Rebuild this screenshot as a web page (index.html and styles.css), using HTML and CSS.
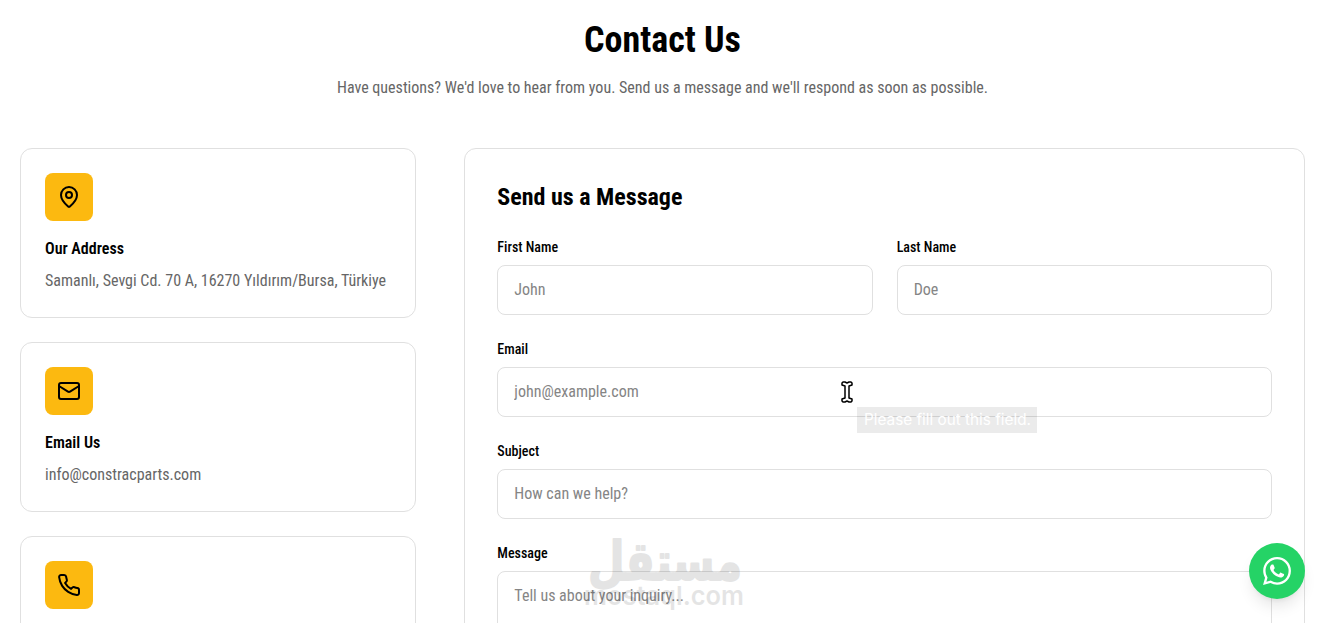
FILE: index.html
```html
<!DOCTYPE html>
<html lang="en">
<head>
    <meta charset="UTF-8">
    <meta name="viewport" content="width=device-width, initial-scale=1.0">
    <title>Contact Us</title>
    <link rel="stylesheet" href="styles.css">
</head>
<body>

    <main class="container">
        <header class="page-header">
            <h1>Contact Us</h1>
            <p>Have questions? We'd love to hear from you. Send us a message and we'll respond as soon as possible.</p>
        </header>

        <div class="contact-grid">
            <div class="info-list">
                <div class="info-card">
                    <div class="info-icon">
                        <svg viewBox="0 0 24 24"><path d="M20 10c0 4.993-5.539 10.193-7.399 11.799a1 1 0 0 1-1.202 0C9.539 20.193 4 14.993 4 10a8 8 0 0 1 16 0"/><circle cx="12" cy="10" r="3"/></svg>
                    </div>
                    <h3>Our Address</h3>
                    <p>Samanlı, Sevgi Cd. 70 A, 16270 Yıldırım/Bursa, Türkiye</p>
                </div>
                <div class="info-card">
                    <div class="info-icon">
                        <svg viewBox="0 0 24 24"><rect width="20" height="16" x="2" y="4" rx="2"/><path d="m22 7-8.97 5.7a1.94 1.94 0 0 1-2.06 0L2 7"/></svg>
                    </div>
                    <h3>Email Us</h3>
                    <p>info@constracparts.com</p>
                </div>
                <div class="info-card">
                    <div class="info-icon">
                        <svg viewBox="0 0 24 24"><path d="M22 16.92v3a2 2 0 0 1-2.18 2 19.79 19.79 0 0 1-8.63-3.07 19.5 19.5 0 0 1-6-6 19.79 19.79 0 0 1-3.07-8.67A2 2 0 0 1 4.11 2h3a2 2 0 0 1 2 1.72 12.84 12.84 0 0 0 .7 2.81 2 2 0 0 1-.45 2.11L8.09 9.91a16 16 0 0 0 6 6l1.27-1.27a2 2 0 0 1 2.11-.45 12.84 12.84 0 0 0 2.81.7A2 2 0 0 1 22 16.92z"/></svg>
                    </div>
                </div>
            </div>

            <form class="contact-form">
                <h2>Send us a Message</h2>
                <div class="form-row">
                    <div class="field">
                        <label for="first-name">First Name</label>
                        <input type="text" id="first-name" placeholder="John" required>
                    </div>
                    <div class="field">
                        <label for="last-name">Last Name</label>
                        <input type="text" id="last-name" placeholder="Doe" required>
                    </div>
                </div>
                <div class="field">
                    <label for="email">Email</label>
                    <input type="email" id="email" placeholder="john@example.com" required>
                </div>
                <div class="field">
                    <label for="subject">Subject</label>
                    <input type="text" id="subject" placeholder="How can we help?" required>
                </div>
                <div class="field">
                    <label for="message">Message</label>
                    <textarea id="message" rows="6" placeholder="Tell us about your inquiry..." required></textarea>
                </div>
            </form>
        </div>
    </main>

    <!-- Pointer and its tooltip -->
    <svg class="pointer" viewBox="0 0 12 22">
        <path d="M2 1h2l2 1 2-1h2l1 1v2L8 5v12l3 1v2l-1 1H8l-2-1-2 1H2l-1-1v-2l3-1V5L1 4V2z"/>
    </svg>
    <div class="tooltip">Please fill out this field.</div>

    <!-- Watermark -->
    <svg class="watermark" viewBox="0 0 164 76">
        <text class="mark-ar" x="82" y="45" text-anchor="middle" textLength="154" lengthAdjust="spacingAndGlyphs">مستقل</text>
        <text class="mark-en" x="1" y="70" textLength="160" lengthAdjust="spacingAndGlyphs">mostaql.com</text>
    </svg>

    <a class="whatsapp" href="#" aria-label="WhatsApp">
        <svg viewBox="0 0 24 24"><path d="M17.472 14.382c-.297-.149-1.758-.867-2.03-.967-.273-.099-.471-.148-.67.15-.197.297-.767.966-.94 1.164-.173.199-.347.223-.644.075-.297-.15-1.255-.463-2.39-1.475-.883-.788-1.48-1.761-1.653-2.059-.173-.297-.018-.458.13-.606.134-.133.298-.347.446-.52.149-.174.198-.298.298-.497.099-.198.05-.371-.025-.52-.075-.149-.669-1.612-.916-2.207-.242-.579-.487-.5-.669-.51-.173-.008-.371-.01-.57-.01-.198 0-.52.074-.792.372-.272.297-1.04 1.016-1.04 2.479 0 1.462 1.065 2.875 1.213 3.074.149.198 2.096 3.2 5.077 4.487.709.306 1.262.489 1.694.625.712.227 1.36.195 1.871.118.571-.085 1.758-.719 2.006-1.413.248-.694.248-1.289.173-1.413-.074-.124-.272-.198-.57-.347m-5.421 7.403h-.004a9.87 9.87 0 0 1-5.031-1.378l-.361-.214-3.741.982.998-3.648-.235-.374a9.86 9.86 0 0 1-1.51-5.26c.001-5.45 4.436-9.884 9.888-9.884 2.64 0 5.122 1.03 6.988 2.898a9.825 9.825 0 0 1 2.893 6.994c-.003 5.45-4.437 9.884-9.885 9.884m8.413-18.297A11.815 11.815 0 0 0 12.05 0C5.495 0 .16 5.335.157 11.892c0 2.096.547 4.142 1.588 5.945L.057 24l6.305-1.654a11.882 11.882 0 0 0 5.683 1.448h.005c6.554 0 11.89-5.335 11.893-11.893a11.821 11.821 0 0 0-3.48-8.413z"/></svg>
    </a>

</body>
</html>
```
FILE: styles.css
```css
* {
    box-sizing: border-box;
}

body {
    margin: 0;
    height: 100vh;
    overflow: hidden;
    font-family: "Roboto Condensed", Roboto, sans-serif;
    font-stretch: 75%;
    font-size: 16px;
    line-height: 24px;
    color: #000;
    background: #fff;
}

h1, h2, h3, p {
    margin: 0;
}

.container {
    padding: 20px 24px 0 20px;
}

.page-header {
    text-align: center;
    margin-bottom: 48px;
}

.page-header h1 {
    font-size: 36px;
    line-height: 40px;
    font-weight: 700;
    margin-bottom: 16px;
}

.page-header p,
.info-card p {
    color: #666;
}

.contact-grid {
    display: grid;
    grid-template-columns: repeat(3, minmax(0, 1fr));
    gap: 48px;
}

/* Left column */
.info-list {
    display: flex;
    flex-direction: column;
    gap: 24px;
}

.info-card {
    height: 170px;
    padding: 24px;
    border: 1px solid #e0e0e0;
    border-radius: 12px;
}

.info-icon {
    display: flex;
    align-items: center;
    justify-content: center;
    width: 48px;
    height: 48px;
    margin-bottom: 16px;
    border-radius: 8px;
    background: #fcb910;
}

.info-icon svg {
    width: 24px;
    height: 24px;
    fill: none;
    stroke: #000;
    stroke-width: 2;
    stroke-linecap: round;
    stroke-linejoin: round;
}

.info-card h3 {
    font-size: 16px;
    font-weight: 600;
    margin-bottom: 8px;
}

/* Form */
.contact-form {
    grid-column: span 2;
    display: flex;
    flex-direction: column;
    gap: 24px;
    padding: 32px;
    border: 1px solid #e0e0e0;
    border-radius: 12px;
}

.contact-form h2 {
    font-size: 24px;
    line-height: 32px;
    font-weight: 700;
}

.form-row {
    display: grid;
    grid-template-columns: 1fr 1fr;
    gap: 24px;
}

.field {
    display: flex;
    flex-direction: column;
    gap: 8px;
}

.field label {
    font-size: 14px;
    line-height: 20px;
    font-weight: 500;
}

.field input,
.field textarea {
    width: 100%;
    padding: 12px 16px;
    border: 1px solid #e0e0e0;
    border-radius: 8px;
    background: transparent;
    font: inherit;
    resize: none;
}

.field input {
    height: 50px;
    padding: 11px 16px 13px;
}

.field ::placeholder {
    color: #858585;
}

/* Overlays */
.pointer {
    position: absolute;
    left: 841px;
    top: 381px;
    width: 12px;
    height: 22px;
    fill: #fff;
    stroke: #000;
    stroke-width: 1.5;
    stroke-linejoin: round;
}

.tooltip {
    position: absolute;
    left: 857px;
    top: 407px;
    width: 180px;
    height: 26px;
    line-height: 26px;
    padding-left: 7px;
    font-family: Inter, sans-serif;
    font-stretch: 100%;
    font-size: 15.3px;
    white-space: nowrap;
    color: #fff;
    background: rgba(0, 0, 0, 0.08);
}

.watermark {
    position: absolute;
    left: 583px;
    top: 535px;
    width: 164px;
    height: 76px;
    overflow: visible;
    fill: #000;
    opacity: 0.1;
}

.mark-ar {
    font-family: "DejaVu Sans", sans-serif;
    font-stretch: 100%;
    font-size: 54px;
    font-weight: 700;
    stroke: #000;
    stroke-width: 2;
    stroke-linejoin: round;
}

.mark-en {
    font-family: Inter, sans-serif;
    font-stretch: 100%;
    font-size: 26px;
    font-weight: 600;
}

.whatsapp {
    position: fixed;
    right: 24px;
    bottom: 24px;
    display: flex;
    align-items: center;
    justify-content: center;
    width: 56px;
    height: 56px;
    border-radius: 50%;
    background: #25d366;
    box-shadow: 0 10px 15px -3px rgba(0, 0, 0, 0.1), 0 4px 6px -4px rgba(0, 0, 0, 0.1);
}

.whatsapp svg {
    width: 28px;
    height: 28px;
    fill: #fff;
}
```
